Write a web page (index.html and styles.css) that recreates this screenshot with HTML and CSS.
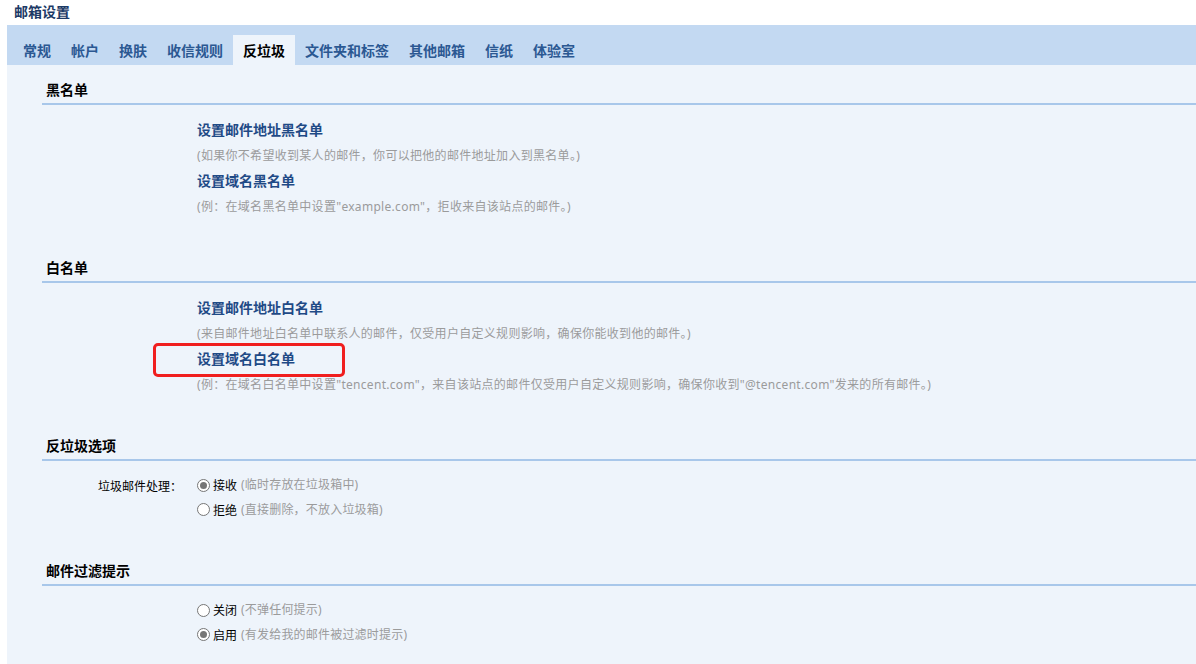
FILE: index.html
```html
<!DOCTYPE html>
<html lang="zh-CN">
<head>
<meta charset="utf-8">
<title>邮箱设置</title>
<link rel="stylesheet" href="styles.css">
</head>
<body>
<div class="page">
  <div class="title">邮箱设置</div>
  <div class="tabs">
    <span class="tab">常规</span>
    <span class="tab">帐户</span>
    <span class="tab">换肤</span>
    <span class="tab">收信规则</span>
    <span class="tab active">反垃圾</span>
    <span class="tab">文件夹和标签</span>
    <span class="tab">其他邮箱</span>
    <span class="tab">信纸</span>
    <span class="tab">体验室</span>
  </div>
  <div class="content">
    <section class="sec">
      <div class="sec-head">黑名单</div>
      <div class="sec-body">
        <div class="row">
          <div class="label"></div>
          <div class="field">
            <div class="line link">设置邮件地址黑名单</div>
            <div class="line desc">(如果你不希望收到某人的邮件，你可以把他的邮件地址加入到黑名单。)</div>
            <div class="line link">设置域名黑名单</div>
            <div class="line desc">(例：在域名黑名单中设置"example.com"，拒收来自该站点的邮件。)</div>
          </div>
        </div>
      </div>
    </section>

    <section class="sec">
      <div class="sec-head">白名单</div>
      <div class="sec-body">
        <div class="row">
          <div class="label"></div>
          <div class="field">
            <div class="line link">设置邮件地址白名单</div>
            <div class="line desc">(来自邮件地址白名单中联系人的邮件，仅受用户自定义规则影响，确保你能收到他的邮件。)</div>
            <div class="line link"><span class="mark">设置域名白名单</span></div>
            <div class="line desc">(例：在域名白名单中设置"tencent.com"，来自该站点的邮件仅受用户自定义规则影响，确保你收到"@tencent.com"发来的所有邮件。)</div>
          </div>
        </div>
      </div>
    </section>

    <section class="sec">
      <div class="sec-head">反垃圾选项</div>
      <div class="sec-body">
        <div class="row">
          <div class="label">垃圾邮件处理：</div>
          <div class="field">
            <div class="line opt"><span class="radio checked"></span><span class="opt-name">接收</span> <span class="opt-desc">(临时存放在垃圾箱中)</span></div>
            <div class="line opt"><span class="radio"></span><span class="opt-name">拒绝</span> <span class="opt-desc">(直接删除，不放入垃圾箱)</span></div>
          </div>
        </div>
      </div>
    </section>

    <section class="sec">
      <div class="sec-head">邮件过滤提示</div>
      <div class="sec-body">
        <div class="row">
          <div class="label"></div>
          <div class="field">
            <div class="line opt"><span class="radio"></span><span class="opt-name">关闭</span> <span class="opt-desc">(不弹任何提示)</span></div>
            <div class="line opt"><span class="radio checked"></span><span class="opt-name">启用</span> <span class="opt-desc">(有发给我的邮件被过滤时提示)</span></div>
          </div>
        </div>
      </div>
    </section>
  </div>
</div>
</body>
</html>
```

FILE: styles.css
```css
html, body {
  margin: 0;
  padding: 0;
  background: #ffffff;
}

body {
  font-family: "Noto Sans CJK SC", "Noto Sans", sans-serif;
  color: #000;
  overflow: hidden;
}

.page {
  padding-left: 7px;
  height: 664px;
  display: flex;
  flex-direction: column;
}

.title {
  flex: none;
  height: 25px;
  line-height: 22px;
  padding-left: 7px;
  font-size: 14px;
  font-weight: bold;
  color: #1c3a66;
}

.tabs {
  flex: none;
  height: 40px;
  background: #c3d9f2;
  display: flex;
  align-items: flex-end;
  padding-left: 6px;
}

.tab {
  height: 30px;
  line-height: 30px;
  padding: 0 10px;
  font-size: 14px;
  font-weight: bold;
  color: #2b5892;
  white-space: nowrap;
}

.tab.active {
  background: #eef4fb;
  color: #000;
}

.content {
  flex: 1 1 auto;
  min-height: 0;
  overflow: hidden;
  background: #eef4fb;
  padding-top: 14px;
}

.sec {
  margin-left: 35px;
  margin-bottom: 38px;
}

.sec-head {
  padding-left: 4px;
  line-height: 20px;
  padding-bottom: 4px;
  border-bottom: 2px solid #a8c7ea;
  font-size: 14px;
  font-weight: bold;
  color: #000;
}

.sec-body {
  padding-top: 12px;
}

.row {
  display: flex;
}

.label {
  width: 140px;
  flex: none;
  padding-right: 15px;
  text-align: right;
  font-size: 12px;
  line-height: 25px;
  color: #000;
}

.field {
  flex: 1;
}

.line {
  line-height: 25.5px;
  white-space: nowrap;
}

.link {
  font-size: 14px;
  font-weight: bold;
  color: #1f4a86;
}

.desc {
  font-family: "Noto Sans", "Noto Sans CJK SC", sans-serif;
  font-size: 12px;
  letter-spacing: 0.3px;
  color: #9b9b9b;
}

.mark {
  position: relative;
}

.mark::after {
  content: "";
  position: absolute;
  left: -44px;
  top: -5px;
  width: 186px;
  height: 28px;
  border: 3px solid #f01e1e;
  border-radius: 5px;
}

.opt {
  font-size: 12px;
  line-height: 24.5px;
  display: flex;
  align-items: center;
}

.radio {
  width: 11px;
  height: 11px;
  border: 1px solid #767676;
  border-radius: 50%;
  background: #fff;
  margin-right: 3px;
  flex: none;
  display: flex;
  align-items: center;
  justify-content: center;
}

.radio.checked::after {
  content: "";
  width: 7px;
  height: 7px;
  border-radius: 50%;
  background: #767676;
}

.opt-name {
  color: #000;
  margin-right: 4px;
}

.opt-desc {
  font-family: "Noto Sans", "Noto Sans CJK SC", sans-serif;
  letter-spacing: 0.2px;
  color: #9b9b9b;
}
```
